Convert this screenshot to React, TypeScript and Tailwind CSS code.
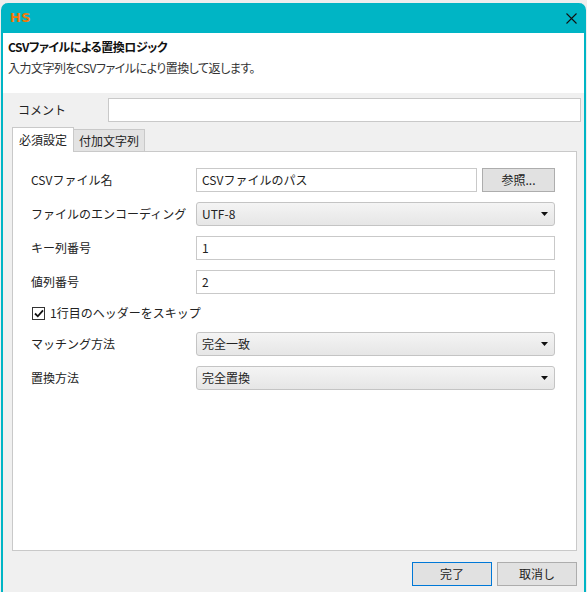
import React from "react";

const font = "font-['Noto_Sans_CJK_JP','Noto_Sans',sans-serif]";

function Field({ value }: { value: string }) {
  return (
    <div className="h-[24px] flex-1 border border-[#c9c9c9] bg-white px-[5px] flex items-center text-[12px] text-[#222]">
      {value}
    </div>
  );
}

function Combo({ value }: { value: string }) {
  return (
    <div className="h-[24px] flex-1 rounded-[3px] border border-[#c4c4c4] bg-gradient-to-b from-[#f4f4f4] to-[#e6e6e6] pl-[5px] pr-[6px] flex items-center justify-between text-[12px] text-[#222]">
      <span>{value}</span>
      <svg width="7" height="4" viewBox="0 0 7 4">
        <path d="M0 0h7L3.5 4z" fill="#111" />
      </svg>
    </div>
  );
}

function Row({ label, children }: { label: string; children: React.ReactNode }) {
  return (
    <div className="flex items-center">
      <div className="w-[165px] text-[12px] text-[#222]">{label}</div>
      {children}
    </div>
  );
}

export default function App() {
  return (
    <div className={`w-[587px] h-[592px] bg-[#eeeeee] overflow-hidden pt-[3px] pl-px ${font}`}>
      <div className="w-[585px] h-[600px] rounded-t-[7px] border-x-2 border-[#00b5c5] bg-[#00b5c5] flex flex-col">
        {/* title bar */}
        <div className="h-[30px] flex items-center justify-between pl-[7px] pr-[6px]">
          <span className="text-[13px] font-bold font-['DejaVu_Sans',sans-serif] text-[#f07a0a] tracking-[0.3px]">HS</span>
          <svg width="11" height="11" viewBox="0 0 11 11" className="mr-[1px]">
            <path d="M0.5 0.5L10.5 10.5M10.5 0.5L0.5 10.5" stroke="#111" strokeWidth="1.1" />
          </svg>
        </div>
        {/* header */}
        <div className="bg-white h-[60px] px-[5px] pt-[5px] [font-feature-settings:'palt'] tracking-[-0.5px]">
          <div className="text-[12px] font-bold text-[#111] leading-[18px]">CSVファイルによる置換ロジック</div>
          <div className="text-[12px] text-[#333] leading-[18px] mt-[3px]">入力文字列をCSVファイルにより置換して返します。</div>
        </div>
        {/* body */}
        <div className="flex-1 bg-[#f0f0f0] pl-[9px] pr-[3px] pt-[5px]">
          <div className="flex items-center">
            <div className="w-[96px] pl-[6px] text-[12px] text-[#222]">コメント</div>
            <div className="h-[24px] flex-1 border border-[#c9c9c9] bg-white" />
          </div>
          {/* tabs */}
          <div className="mt-[6px] mr-[3px] flex items-end h-[24px]">
            <div className="h-[25px] w-[62px] relative z-10 bg-white border border-b-0 border-[#c9c9c9] flex items-center justify-center text-[12px] text-[#222]">
              必須設定
            </div>
            <div className="h-[23px] w-[72px] -ml-px bg-[#e3e3e3] border border-[#c9c9c9] flex items-center justify-center text-[12px] text-[#222]">
              付加文字列
            </div>
          </div>
          <div className="h-[400px] mr-[4px] -mt-px bg-white border border-[#c9c9c9] pl-[18px] pr-[21px] pt-[16px] flex flex-col gap-[10px]">
            <Row label="CSVファイル名">
              <Field value="CSVファイルのパス" />
              <div className="ml-[5px] w-[73px] h-[24px] border border-[#adadad] bg-[#e1e1e1] flex items-center justify-center text-[12px] text-[#222]">
                参照...
              </div>
            </Row>
            <Row label="ファイルのエンコーディング">
              <Combo value="UTF-8" />
            </Row>
            <Row label="キー列番号">
              <Field value="1" />
            </Row>
            <Row label="値列番号">
              <Field value="2" />
            </Row>
            <div className="flex items-center h-[18px] pl-px">
              <div className="w-[13px] h-[13px] border border-[#333] bg-white flex items-center justify-center">
                <svg width="10" height="9" viewBox="0 0 10 9">
                  <path d="M1 4.5L3.8 7.3L9 1.3" stroke="#111" strokeWidth="1.8" fill="none" />
                </svg>
              </div>
              <span className="ml-[5px] text-[12px] text-[#222]">1行目のヘッダーをスキップ</span>
            </div>
            <Row label="マッチング方法">
              <Combo value="完全一致" />
            </Row>
            <Row label="置換方法">
              <Combo value="完全置換" />
            </Row>
          </div>
          {/* footer */}
          <div className="mt-[11px] mr-[4px] flex justify-end gap-[5px]">
            <div className="w-[80px] h-[24px] border border-[#0078d7] bg-[#e1e1e1] flex items-center justify-center text-[12px] text-[#222]">
              完了
            </div>
            <div className="w-[80px] h-[24px] border border-[#adadad] bg-[#e1e1e1] flex items-center justify-center text-[12px] text-[#222]">
              取消し
            </div>
          </div>
        </div>
      </div>
    </div>
  );
}
